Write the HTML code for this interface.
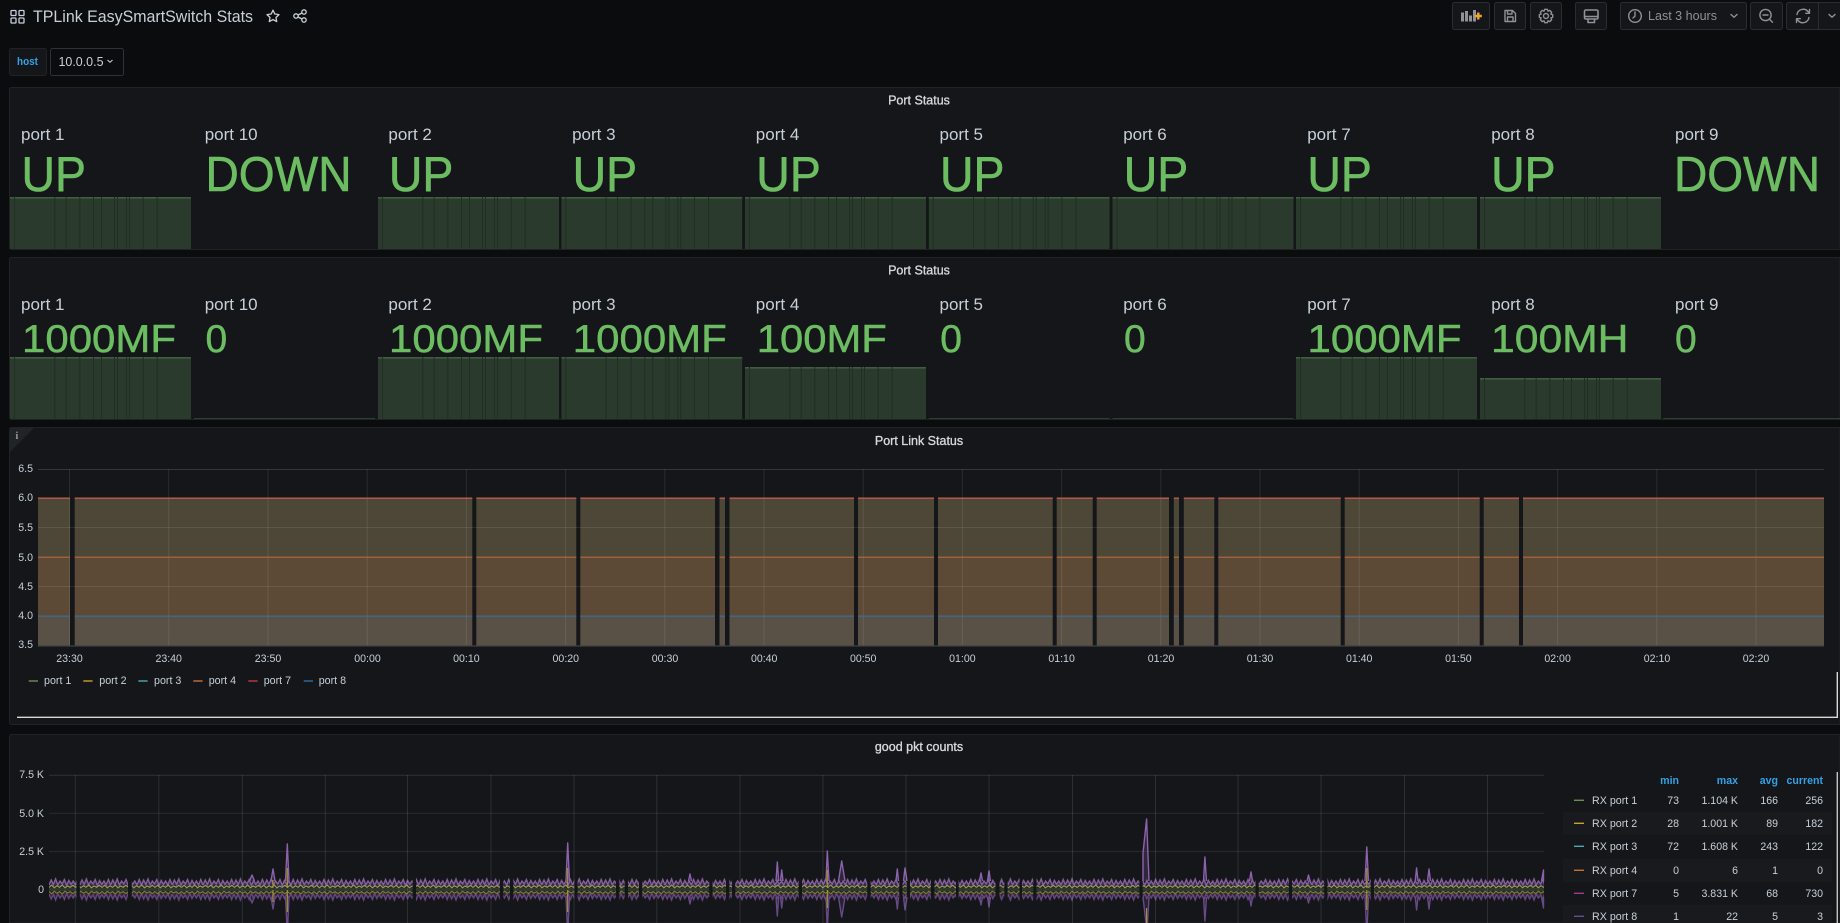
<!DOCTYPE html>
<html lang="en">
<head>
<meta charset="utf-8">
<title>TPLink EasySmartSwitch Stats</title>
<style>
html,body{margin:0;padding:0;background:#0b0c0e;width:1840px;height:923px;overflow:hidden}
svg{display:block}
text{font-family:"Liberation Sans",sans-serif}
.pt{font-size:12.5px;fill:#d8d9da;stroke:#d8d9da;stroke-width:.3px;text-anchor:middle}
.lb{font-size:17px;fill:#c7d0d9}
.v1{font-size:49px;fill:#6cbc62;stroke:#6cbc62;stroke-width:.6px}
.v2{font-size:39px;fill:#6cbc62;stroke:#6cbc62;stroke-width:.5px}
.ay{font-size:10.6px;fill:#c7d0d9;text-anchor:end}
.xl{font-size:10.6px;fill:#c7d0d9;text-anchor:middle}
.lg{font-size:10.7px;fill:#c7d0d9}
.tb{font-size:10.6px;fill:#c7d0d9;text-anchor:end}
.th{font-size:10.6px;font-weight:700;fill:#33a2e5;text-anchor:end}
.btn{fill:#141619;stroke:#2a2c30;stroke-width:1}
.ic{fill:none;stroke:#8e9196;stroke-width:1.4;stroke-linecap:round;stroke-linejoin:round}
.sp{fill:rgba(140,95,175,.22);stroke:#8c62ad;stroke-width:1.4;stroke-linejoin:round}
.sl{fill:rgba(110,75,140,.22);stroke:#684a86;stroke-width:1.4;stroke-linejoin:round}
.sy{fill:none;stroke:#a8983a;stroke-width:1.1}
</style>
</head>
<body>
<svg xmlns="http://www.w3.org/2000/svg" width="1840" height="923" viewBox="0 0 1840 923">
<defs>
<g id="s">
<rect x="0" y="0" width="181" height="62" fill="#2a3a2c"/>
<rect x="0" y="0" width="181" height="1.6" fill="#3f5e3f"/>
<g fill="#222f25">
<rect x="4" y="0" width="1" height="62"/><rect x="44.3" y="0" width="1" height="62"/><rect x="55.7" y="0" width="1" height="62"/><rect x="69.3" y="0" width="1" height="62"/><rect x="83" y="0" width="1" height="62"/><rect x="91" y="0" width="1" height="62"/><rect x="104" y="0" width="1" height="62"/><rect x="107" y="0" width="1" height="62"/><rect x="116" y="0" width="1" height="62"/><rect x="119" y="0" width="1" height="62"/><rect x="132.7" y="0" width="1" height="62"/><rect x="146.7" y="0" width="1" height="62"/>
</g>
</g>
<pattern id="wa" patternUnits="userSpaceOnUse" x="49" y="870" width="30.8" height="40">
<polygon points="0,15 2.2,10 4.4,14.5 6.6,9 8.8,15 11,11 13.2,14 15.4,9.5 17.6,15.5 19.8,10.5 22,14.5 24.2,11 26.4,15 28.6,9.5 30.8,15 30.8,17 0,17" fill="rgba(140,95,175,.28)"/>
<polyline points="0,15 2.2,10 4.4,14.5 6.6,9 8.8,15 11,11 13.2,14 15.4,9.5 17.6,15.5 19.8,10.5 22,14.5 24.2,11 26.4,15 28.6,9.5 30.8,15" fill="none" stroke="#86609f" stroke-width="1.4"/>
<polygon points="0,24 2.2,29 4.4,24.5 6.6,30 8.8,24 11,28 13.2,25 15.4,29.500 17.6,23.500 19.8,28.500 22,24.500 24.2,28 26.4,24 28.6,29.500 30.8,24 30.8,22 0,22" fill="rgba(110,75,140,.3)"/>
<polyline points="0,24 2.2,29 4.4,24.5 6.6,30 8.8,24 11,28 13.2,25 15.4,29.5 17.6,23.5 19.8,28.5 22,24.5 24.2,28 26.4,24 28.6,29.5 30.8,24" fill="none" stroke="#64477f" stroke-width="1.4"/>
</pattern>
<pattern id="wb" patternUnits="userSpaceOnUse" x="49" y="870" width="26.5" height="40">
<rect x="0" y="17.500" width="26.500" height="4" fill="#2a3a30"/>
<polyline points="0,17.500 2.650,15.200 5.300,17.800 7.950,15.800 10.600,17.300 13.250,15 15.900,17.800 18.550,16 21.200,17.300 23.850,15.300 26.500,17.500" fill="none" stroke="#a09a4c" stroke-width="1.100"/>
<polyline points="0,21.500 2.650,23.800 5.300,21.200 7.950,23.200 10.600,21.700 13.250,24 15.900,21.200 18.550,23 21.200,21.700 23.850,23.700 26.500,21.500" fill="none" stroke="#857a1c" stroke-width="1.100"/>
</pattern>
</defs>

<rect width="1840" height="923" fill="#0b0c0e"/>

<!-- top bar left -->
<g fill="none" stroke="#c7d0d9" stroke-width="1.3">
<rect x="11" y="10.5" width="5" height="5" rx=".8"/><rect x="19" y="10.5" width="5" height="5" rx=".8"/><rect x="11" y="18" width="5" height="5" rx=".8"/><rect x="19" y="18" width="5" height="5" rx=".8"/>
</g>
<text x="33" y="22" font-size="16.5" fill="#c7d0d9" textLength="220" lengthAdjust="spacingAndGlyphs">TPLink EasySmartSwitch Stats</text>
<path d="M273 10.2l1.8 3.8 4.2.6-3 2.9.7 4.1-3.7-2-3.7 2 .7-4.1-3-2.9 4.2-.6z" fill="none" stroke="#c7d0d9" stroke-width="1.3" stroke-linejoin="round"/>
<g fill="none" stroke="#c7d0d9" stroke-width="1.3"><circle cx="296" cy="16" r="2.2"/><circle cx="304" cy="12" r="2.2"/><circle cx="304" cy="20" r="2.2"/><path d="M298 15l4-2M298 17l4 2"/></g>

<!-- toolbar -->
<rect class="btn" x="1452.5" y="2.5" width="37" height="27" rx="2"/>
<rect class="btn" x="1494.5" y="2.5" width="31" height="27" rx="2"/>
<rect class="btn" x="1530.5" y="2.5" width="31" height="27" rx="2"/>
<rect class="btn" x="1575.5" y="2.5" width="31" height="27" rx="2"/>
<rect class="btn" x="1620.5" y="2.5" width="126" height="27" rx="2"/>
<rect class="btn" x="1750.5" y="2.5" width="32" height="27" rx="2"/>
<path class="btn" d="M1840 2.5H1788.500a2 2 0 0 0-2 2v23a2 2 0 0 0 2 2H1840"/>
<path d="M1818.5 2.5v27" stroke="#2a2c30"/>
<g fill="#8e9196"><rect x="1461" y="12.500" width="3" height="9"/><rect x="1465" y="11" width="3" height="10.500"/><rect x="1469" y="15.500" width="3" height="6"/><rect x="1473" y="10" width="3" height="11.500"/></g>
<path d="M1478.3 12.500v7M1474.800 16h7" stroke="#f5a42a" stroke-width="2.400"/>
<path class="ic" d="M1505 10.500h7.500l3 3v8h-10.500zM1507.500 10.500v3.500h4.500v-3.500M1507.500 21.500v-4.500h5.500v4.500"/>
<g class="ic"><circle cx="1546" cy="16" r="2.500"/><polygon points="1552.68,14.7 1552.68,17.3 1550.8,17.99 1551.64,19.8 1549.8,21.64 1547.99,20.8 1547.3,22.68 1544.7,22.68 1544.01,20.8 1542.2,21.64 1540.36,19.8 1541.2,17.99 1539.32,17.3 1539.32,14.7 1541.2,14.01 1540.36,12.2 1542.2,10.36 1544.01,11.2 1544.7,9.32 1547.3,9.32 1547.99,11.2 1549.8,10.36 1551.64,12.2 1550.8,14.01"/></g>
<path class="ic" style="stroke-width:1.600" d="M1586 10h10.500q1.500 0 1.500 1.500v6q0 1.500-1.500 1.500h-10.500q-1.500 0-1.500-1.500v-6q0-1.500 1.500-1.500zM1584.500 16.500h13.500M1588 19.500v3h6.500v-3"/>
<g class="ic"><circle cx="1635" cy="16" r="6.300"/><path d="M1635 12v4.200l-2 1.800"/></g>
<text x="1648" y="20" font-size="12.500" fill="#8e9196" textLength="69" lengthAdjust="spacingAndGlyphs">Last 3 hours</text>
<path class="ic" d="M1731 14.500l3 2.800 3-2.800"/>
<g class="ic"><circle cx="1765.500" cy="15" r="5.600"/><path d="M1769.500 19.200l3 3M1763 15h5"/></g>
<g class="ic"><path d="M1797 14.500a6.300 6.300 0 0 1 11-3l1.500 1.500M1809.500 9.500v3.800h-3.800M1809 17.500a6.300 6.300 0 0 1-11 3l-1.500-1.500M1796.500 22.500v-3.800h3.800"/></g>
<path class="ic" d="M1829 14.500l3 2.800 3-2.800"/>

<!-- variable row -->
<rect x="9.500" y="48.500" width="37" height="27" rx="2" fill="#141619" stroke="#202226"/>
<text x="17" y="65" font-size="11" font-weight="700" fill="#33a2e5" textLength="21" lengthAdjust="spacingAndGlyphs">host</text>
<rect x="50.500" y="48.500" width="73" height="27" rx="2" fill="#0b0c0e" stroke="#2c3235"/>
<text x="58.500" y="66" font-size="12.500" fill="#c7d0d9" textLength="45" lengthAdjust="spacingAndGlyphs">10.0.0.5</text>
<path d="M107.500 60l2.500 2.300 2.500-2.300" fill="none" stroke="#c7d0d9" stroke-width="1"/>

<!-- panel 1 -->
<path d="M1840 87.500H11.500a2 2 0 0 0-2 2V247.500a2 2 0 0 0 2 2H1840z" fill="#141619" stroke="#202226"/>
<text class="pt" x="919" y="104.500">Port Status</text>
<svg x="10" y="197" width="181" height="52"><use href="#s"/></svg>
<svg x="378" y="197" width="181" height="52"><use href="#s"/></svg>
<svg x="561.300" y="197" width="181" height="52"><use href="#s"/></svg>
<svg x="745" y="197" width="181" height="52"><use href="#s"/></svg>
<svg x="928.700" y="197" width="181" height="52"><use href="#s"/></svg>
<svg x="1112.500" y="197" width="181" height="52"><use href="#s"/></svg>
<svg x="1296" y="197" width="181" height="52"><use href="#s"/></svg>
<svg x="1480" y="197" width="181" height="52"><use href="#s"/></svg>
<text class="lb" x="21" y="140">port 1</text><text class="lb" x="204.700" y="140">port 10</text><text class="lb" x="388.400" y="140">port 2</text><text class="lb" x="572.100" y="140">port 3</text><text class="lb" x="755.800" y="140">port 4</text><text class="lb" x="939.500" y="140">port 5</text><text class="lb" x="1123.200" y="140">port 6</text><text class="lb" x="1307.200" y="140">port 7</text><text class="lb" x="1491.200" y="140">port 8</text><text class="lb" x="1675" y="140">port 9</text>
<text class="v1" x="21.500" y="191" textLength="64.500" lengthAdjust="spacingAndGlyphs">UP</text>
<text class="v1" x="205.500" y="191" textLength="146" lengthAdjust="spacingAndGlyphs">DOWN</text>
<text class="v1" x="388.900" y="191" textLength="64.500" lengthAdjust="spacingAndGlyphs">UP</text>
<text class="v1" x="572.600" y="191" textLength="64.500" lengthAdjust="spacingAndGlyphs">UP</text>
<text class="v1" x="756.300" y="191" textLength="64.500" lengthAdjust="spacingAndGlyphs">UP</text>
<text class="v1" x="940" y="191" textLength="64.500" lengthAdjust="spacingAndGlyphs">UP</text>
<text class="v1" x="1123.700" y="191" textLength="64.500" lengthAdjust="spacingAndGlyphs">UP</text>
<text class="v1" x="1307.400" y="191" textLength="64.500" lengthAdjust="spacingAndGlyphs">UP</text>
<text class="v1" x="1491.100" y="191" textLength="64.500" lengthAdjust="spacingAndGlyphs">UP</text>
<text class="v1" x="1674" y="191" textLength="146" lengthAdjust="spacingAndGlyphs">DOWN</text>

<!-- panel 2 -->
<path d="M1840 257.500H11.500a2 2 0 0 0-2 2V417.500a2 2 0 0 0 2 2H1840z" fill="#141619" stroke="#202226"/>
<text class="pt" x="919" y="274.500">Port Status</text>
<svg x="10" y="357" width="181" height="62"><use href="#s"/></svg>
<svg x="378" y="357" width="181" height="62"><use href="#s"/></svg>
<svg x="561.300" y="357" width="181" height="62"><use href="#s"/></svg>
<svg x="745" y="367" width="181" height="52"><use href="#s"/></svg>
<svg x="1296" y="357" width="181" height="62"><use href="#s"/></svg>
<svg x="1480" y="378" width="181" height="41"><use href="#s"/></svg>
<g fill="#2c402e"><rect x="194" y="418" width="181" height="1"/><rect x="928.700" y="418" width="181" height="1"/><rect x="1112.500" y="418" width="181" height="1"/><rect x="1663.300" y="418" width="176.700" height="1"/></g>
<text class="lb" x="21" y="310">port 1</text><text class="lb" x="204.700" y="310">port 10</text><text class="lb" x="388.400" y="310">port 2</text><text class="lb" x="572.100" y="310">port 3</text><text class="lb" x="755.800" y="310">port 4</text><text class="lb" x="939.500" y="310">port 5</text><text class="lb" x="1123.200" y="310">port 6</text><text class="lb" x="1307.200" y="310">port 7</text><text class="lb" x="1491.200" y="310">port 8</text><text class="lb" x="1675" y="310">port 9</text>
<text class="v2" x="22" y="352" textLength="154" lengthAdjust="spacingAndGlyphs">1000MF</text>
<text class="v2" x="205.500" y="352">0</text>
<text class="v2" x="389" y="352" textLength="154" lengthAdjust="spacingAndGlyphs">1000MF</text>
<text class="v2" x="572.800" y="352" textLength="154" lengthAdjust="spacingAndGlyphs">1000MF</text>
<text class="v2" x="756.800" y="352" textLength="130" lengthAdjust="spacingAndGlyphs">100MF</text>
<text class="v2" x="940.200" y="352">0</text>
<text class="v2" x="1124" y="352">0</text>
<text class="v2" x="1307.500" y="352" textLength="154" lengthAdjust="spacingAndGlyphs">1000MF</text>
<text class="v2" x="1491" y="352" textLength="137.500" lengthAdjust="spacingAndGlyphs">100MH</text>
<text class="v2" x="1675" y="352">0</text>

<!-- panel 3 -->
<path d="M1840 427.500H11.500a2 2 0 0 0-2 2V722.500a2 2 0 0 0 2 2H1840z" fill="#141619" stroke="#202226"/>
<path d="M10 428h24l-24 24z" fill="#202328"/>
<text x="15.500" y="439" font-size="10" font-weight="700" fill="#9a9da1" style="font-family:'Liberation Serif',serif">i</text>
<text class="pt" x="919" y="445">Port Link Status</text>

<path d="M38 469.500h1786" stroke="#33353a"/>
<rect x="38" y="498" width="1786" height="59" fill="#4d4737"/>
<rect x="38" y="557" width="1786" height="59" fill="#5d4a36"/>
<rect x="38" y="616" width="1786" height="30" fill="#595145"/>
<g fill="#141619">
<rect x="70" y="497" width="4.700" height="149"/><rect x="472.300" y="497" width="4" height="149"/><rect x="576.300" y="497" width="4" height="149"/><rect x="715" y="497" width="4.500" height="149"/><rect x="725" y="497" width="4.500" height="149"/><rect x="854" y="497" width="4" height="149"/><rect x="934" y="497" width="4" height="149"/><rect x="1052.700" y="497" width="4" height="149"/><rect x="1092.700" y="497" width="4" height="149"/><rect x="1169" y="497" width="4.800" height="149"/><rect x="1179" y="497" width="4.800" height="149"/><rect x="1214.300" y="497" width="4" height="149"/><rect x="1340.700" y="497" width="4" height="149"/><rect x="1479.700" y="497" width="4" height="149"/><rect x="1519" y="497" width="4" height="149"/>
</g>
<g stroke="rgba(255,255,255,.09)" stroke-width="1">
<path d="M38 527.500h1786M38 586.500h1786"/>
<path d="M69.500 469v177M168.700 469v177M268 469v177M367.200 469v177M466.400 469v177M565.600 469v177M664.800 469v177M764 469v177M863.200 469v177M962.400 469v177M1061.600 469v177M1160.800 469v177M1260 469v177M1359.200 469v177M1458.400 469v177M1557.600 469v177M1656.800 469v177M1756 469v177"/>
</g>
<path d="M38 498.200H70M74.700 498.200H472.300M476.300 498.200H576.300M580.300 498.200H715M719.500 498.200H725M729.500 498.200H854M858 498.200H934M938 498.200H1052.700M1056.700 498.200H1092.700M1096.700 498.200H1169M1173.800 498.200H1179M1183.800 498.200H1214.300M1218.300 498.200H1340.700M1344.700 498.200H1479.700M1483.700 498.200H1519M1523 498.200H1824" stroke="#c2594c" stroke-width="1.300"/>
<path d="M38 557.200H70M74.700 557.200H472.300M476.300 557.200H576.300M580.300 557.200H715M719.500 557.200H725M729.500 557.200H854M858 557.200H934M938 557.200H1052.700M1056.700 557.200H1092.700M1096.700 557.200H1169M1173.800 557.200H1179M1183.800 557.200H1214.300M1218.300 557.200H1340.700M1344.700 557.200H1479.700M1483.700 557.200H1519M1523 557.200H1824" stroke="#b4693c" stroke-width="1.200"/>
<path d="M38 616.200H70M74.700 616.200H472.300M476.300 616.200H576.300M580.300 616.200H715M719.500 616.200H725M729.500 616.200H854M858 616.200H934M938 616.200H1052.700M1056.700 616.200H1092.700M1096.700 616.200H1169M1173.800 616.200H1179M1183.800 616.200H1214.300M1218.300 616.200H1340.700M1344.700 616.200H1479.700M1483.700 616.200H1519M1523 616.200H1824" stroke="#3d6a8c" stroke-width="1.300"/>
<path d="M38 646h1786" stroke="#3e4042" stroke-width="1.200"/>
<text class="ay" x="33" y="472">6.5</text><text class="ay" x="33" y="501">6.0</text><text class="ay" x="33" y="531">5.5</text><text class="ay" x="33" y="561">5.0</text><text class="ay" x="33" y="590">4.5</text><text class="ay" x="33" y="619">4.0</text><text class="ay" x="33" y="648">3.5</text>
<text class="xl" x="69.500" y="662">23:30</text><text class="xl" x="168.700" y="662">23:40</text><text class="xl" x="268" y="662">23:50</text><text class="xl" x="367.500" y="662">00:00</text><text class="xl" x="466.400" y="662">00:10</text><text class="xl" x="565.800" y="662">00:20</text><text class="xl" x="665" y="662">00:30</text><text class="xl" x="764.200" y="662">00:40</text><text class="xl" x="863.200" y="662">00:50</text><text class="xl" x="962.400" y="662">01:00</text><text class="xl" x="1061.600" y="662">01:10</text><text class="xl" x="1161" y="662">01:20</text><text class="xl" x="1260" y="662">01:30</text><text class="xl" x="1359.200" y="662">01:40</text><text class="xl" x="1458.400" y="662">01:50</text><text class="xl" x="1557.600" y="662">02:00</text><text class="xl" x="1657" y="662">02:10</text><text class="xl" x="1756" y="662">02:20</text>
<g stroke-width="1.400">
<path d="M28.700 681h9.300" stroke="#6f8f50"/><path d="M83.300 681h9.300" stroke="#c9a227"/><path d="M138.300 681h9.300" stroke="#4fa8b3"/><path d="M193.300 681h9.300" stroke="#c8703a"/><path d="M248.300 681h9.300" stroke="#c03a45"/><path d="M303.700 681h9.300" stroke="#2e6ca4"/>
</g>
<text class="lg" x="44" y="684">port 1</text><text class="lg" x="99.300" y="684">port 2</text><text class="lg" x="154" y="684">port 3</text><text class="lg" x="208.700" y="684">port 4</text><text class="lg" x="263.700" y="684">port 7</text><text class="lg" x="318.700" y="684">port 8</text>
<path d="M17 717.300H1837.300V672" fill="none" stroke="#d8d9d4" stroke-width="1.400"/>

<!-- panel 4 -->
<path d="M1840 734.500H11.500a2 2 0 0 0-2 2V923H1840z" fill="#141619" stroke="#202226"/>
<text class="pt" x="919" y="751">good pkt counts</text>
<path d="M49 775.300h1495" stroke="#2c2e33" stroke-width="1.200"/>
<path d="M49 813.300h1495M49 851.500h1495M49 889.500h1495" stroke="#26282c" stroke-width="1.200"/>
<rect x="49" y="870" width="1495" height="40" fill="url(#wa)"/>
<rect x="49" y="870" width="1495" height="40" fill="url(#wb)"/>
<g fill="#141619">
<rect x="76.500" y="872" width="3.300" height="36"/><rect x="128" y="872" width="3.800" height="36"/><rect x="412.700" y="872" width="3.300" height="36"/><rect x="500" y="872" width="3.300" height="36"/><rect x="510" y="872" width="3.300" height="36"/><rect x="574.300" y="872" width="3.300" height="36"/><rect x="616" y="872" width="3.300" height="36"/><rect x="624.700" y="872" width="3.300" height="36"/><rect x="639" y="872" width="3.300" height="36"/><rect x="709.300" y="872" width="3.300" height="36"/><rect x="726" y="872" width="3.300" height="36"/><rect x="732" y="872" width="3.300" height="36"/><rect x="798.700" y="872" width="3.300" height="36"/><rect x="867.300" y="872" width="3.300" height="36"/><rect x="899.300" y="872" width="3.300" height="36"/><rect x="906.700" y="872" width="3.300" height="36"/><rect x="931" y="872" width="3.500" height="36"/><rect x="956" y="872" width="2.600" height="36"/><rect x="995.500" y="872" width="4" height="36"/><rect x="1004.400" y="872" width="3.200" height="36"/><rect x="1019.600" y="872" width="2.400" height="36"/><rect x="1033.300" y="872" width="3.200" height="36"/><rect x="1139.400" y="872" width="3.200" height="36"/><rect x="1255.500" y="872" width="3.200" height="36"/><rect x="1288.800" y="872" width="3.200" height="36"/><rect x="1324.200" y="872" width="3.200" height="36"/><rect x="1370.800" y="872" width="3.200" height="36"/>
</g>
<g class="sp">
<path d="M249.500 881L252 875L254.500 881"/>
<path d="M271 881L273 869L275 881"/>
<path d="M285.500 881L287.300 844L289 881"/>
<path d="M566 881L567.700 843L569.500 881"/>
<path d="M688.500 881L690 874L691.500 881"/>
<path d="M776 881L777.300 862L778.700 881"/>
<path d="M780.500 881L781.700 870L783 881"/>
<path d="M826 881L827.300 851L829 881"/>
<path d="M838.500 881L841.700 861L845 881"/>
<path d="M896 881L897.300 869L898.500 881"/>
<path d="M903.500 881L905 868L907 881"/>
<path d="M979.500 881L981 873L982.500 881"/>
<path d="M987.500 881L989 871L990.500 881"/>
<path d="M1143 881L1143 853L1146.600 819L1149 881"/>
<path d="M1203.500 881L1204.900 857L1206.500 881"/>
<path d="M1249.500 881L1251 872L1252.500 881"/>
<path d="M1307 881L1308.500 875L1310 881"/>
<path d="M1365 881L1366.800 847L1368.500 881"/>
<path d="M1415.200 881L1416.600 868L1418 881"/>
<path d="M1427.500 881L1429 869L1430.500 881"/>
<path d="M1541.500 881L1543.500 870L1543.500 881"/>
</g>
<g class="sl">
<path d="M254.500 897L252 903L249.500 897"/>
<path d="M275 897L273 909L271 897"/>
<path d="M289 897L287.800 923H286.800L285.500 897"/>
<path d="M569.500 897L568.200 923H567.200L566 897"/>
<path d="M691.500 897L690 904L688.500 897"/>
<path d="M778.700 897L777.300 916L776 897"/>
<path d="M783 897L781.700 908L780.500 897"/>
<path d="M829 897L827.600 923H827L826 897"/>
<path d="M845 897L841.700 917L838.500 897"/>
<path d="M898.500 897L897.300 909L896 897"/>
<path d="M907 897L905 910L903.500 897"/>
<path d="M982.500 897L981 905L979.500 897"/>
<path d="M990.500 897L989 907L987.500 897"/>
<path d="M1149 897L1147.500 923H1146L1143 897"/>
<path d="M1206.500 897L1204.900 921L1203.500 897"/>
<path d="M1252.500 897L1251 906L1249.500 897"/>
<path d="M1310 897L1308.500 903L1307 897"/>
<path d="M1368.500 897L1367.300 923H1366.300L1365 897"/>
<path d="M1418 897L1416.600 910L1415.200 897"/>
<path d="M1430.500 897L1429 909L1427.500 897"/>
<path d="M1543.500 897L1543.500 908L1541.500 897"/>
</g>
<path class="sy" d="M287.300 888V868M287.300 890V912M567.700 888V868M567.700 890V912M827.300 888V870M827.300 890V908M1366.800 888V868M1366.800 890V910M273 888V880M273 890V902M1146.600 908V923"/>
<path stroke="rgba(200,205,210,.14)" stroke-width="1" d="M75.300 775v148M158.800 775v148M242.300 775v148M325.300 775v148M407.500 775v148M491 775v148M574 775v148M656.800 775v148M740 775v148M823 775v148M906 775v148M989 775v148M1072.500 775v148M1155.500 775v148M1238 775v148M1321 775v148M1404.500 775v148M1487.500 775v148"/>
<text class="ay" x="44" y="778">7.5 K</text><text class="ay" x="44" y="817">5.0 K</text><text class="ay" x="44" y="855">2.5 K</text><text class="ay" x="44" y="893">0</text>

<!-- legend table -->
<g fill="#181a1e"><rect x="1563" y="812" width="269" height="23"/><rect x="1563" y="859" width="269" height="23"/><rect x="1563" y="905" width="269" height="18"/></g>
<text class="th" x="1679" y="784">min</text><text class="th" x="1738" y="784">max</text><text class="th" x="1778" y="784">avg</text><text class="th" x="1823" y="784">current</text>
<g stroke-width="1.400">
<path d="M1574 800.300h10" stroke="#6f8f50"/><path d="M1574 823.300h10" stroke="#c9a227"/><path d="M1574 846.300h10" stroke="#4fa8b3"/><path d="M1574 870.300h10" stroke="#c8703a"/><path d="M1574 893.300h10" stroke="#a8388c"/><path d="M1574 916.300h10" stroke="#6a4a9a"/>
</g>
<text class="lg" x="1592" y="804">RX port 1</text><text class="tb" x="1679" y="804">73</text><text class="tb" x="1738" y="804">1.104 K</text><text class="tb" x="1778" y="804">166</text><text class="tb" x="1823" y="804">256</text>
<text class="lg" x="1592" y="827">RX port 2</text><text class="tb" x="1679" y="827">28</text><text class="tb" x="1738" y="827">1.001 K</text><text class="tb" x="1778" y="827">89</text><text class="tb" x="1823" y="827">182</text>
<text class="lg" x="1592" y="850">RX port 3</text><text class="tb" x="1679" y="850">72</text><text class="tb" x="1738" y="850">1.608 K</text><text class="tb" x="1778" y="850">243</text><text class="tb" x="1823" y="850">122</text>
<text class="lg" x="1592" y="874">RX port 4</text><text class="tb" x="1679" y="874">0</text><text class="tb" x="1738" y="874">6</text><text class="tb" x="1778" y="874">1</text><text class="tb" x="1823" y="874">0</text>
<text class="lg" x="1592" y="897">RX port 7</text><text class="tb" x="1679" y="897">5</text><text class="tb" x="1738" y="897">3.831 K</text><text class="tb" x="1778" y="897">68</text><text class="tb" x="1823" y="897">730</text>
<text class="lg" x="1592" y="920">RX port 8</text><text class="tb" x="1679" y="920">1</text><text class="tb" x="1738" y="920">22</text><text class="tb" x="1778" y="920">5</text><text class="tb" x="1823" y="920">3</text>
<path d="M1837.300 772V923" stroke="#c4c5c2" stroke-width="1.400"/>
</svg>
</body>
</html>
